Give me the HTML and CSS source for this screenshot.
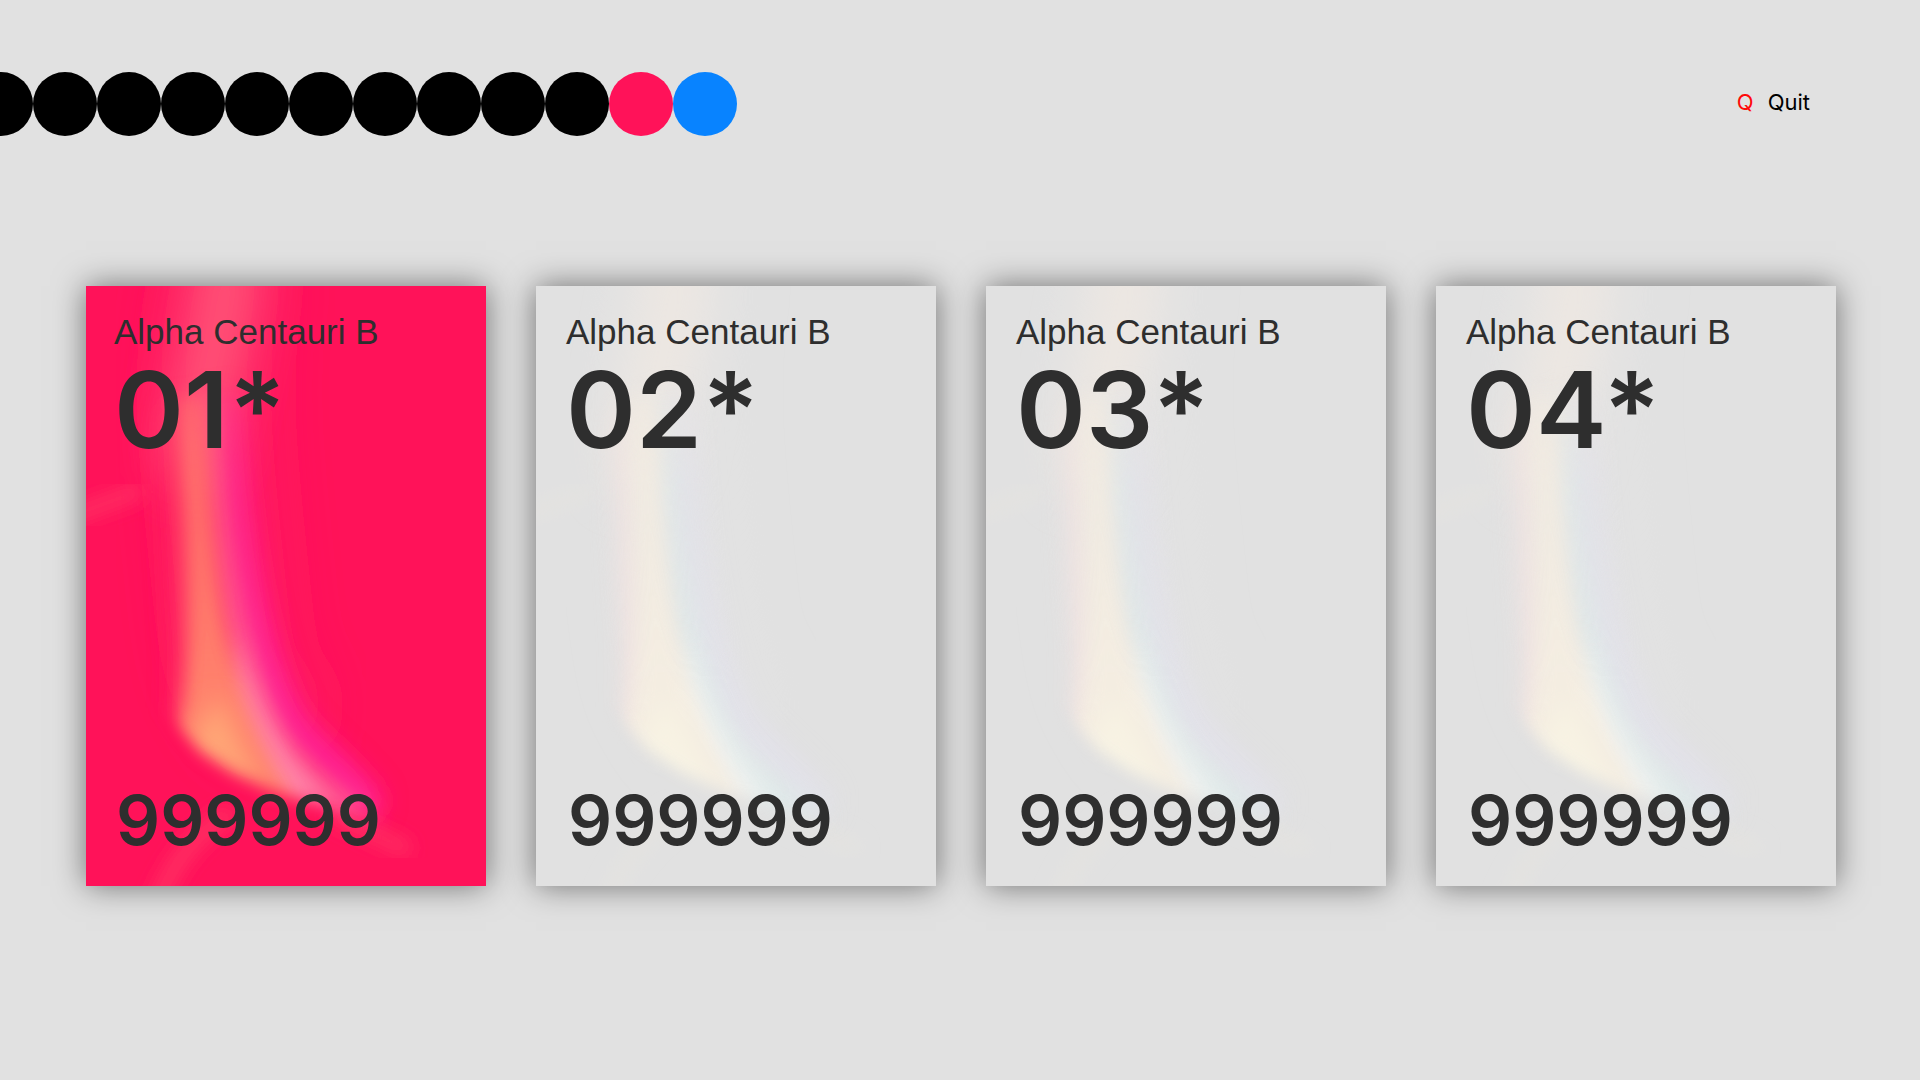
FILE: index.html
```html
<!DOCTYPE html>
<html lang="en">
<head>
  <meta charset="utf-8">
  <meta name="viewport" content="width=device-width, initial-scale=1">
  <title>Alpha Centauri B</title>
  <link rel="stylesheet" href="styles.css">
</head>
<body>
  <svg class="defs" aria-hidden="true">
    <defs>
      <filter id="blur-s" x="-100%" y="-30%" width="300%" height="160%"><feGaussianBlur stdDeviation="9"/></filter>
      <filter id="blur-m" x="-200%" y="-50%" width="500%" height="200%"><feGaussianBlur stdDeviation="12"/></filter>
      <filter id="blur-l" x="-200%" y="-50%" width="500%" height="200%"><feGaussianBlur stdDeviation="26"/></filter>
      <filter id="blur-edge" x="-10%" y="-10%" width="120%" height="120%"><feGaussianBlur stdDeviation="8"/></filter>
      <linearGradient id="rise" gradientUnits="userSpaceOnUse" x1="0" y1="60" x2="0" y2="400">
        <stop offset="0" stop-color="#333"/>
        <stop offset="0.4" stop-color="#bbb"/>
        <stop offset="1" stop-color="#fff"/>
      </linearGradient>
      <mask id="above-floor" maskUnits="userSpaceOnUse" x="0" y="0" width="400" height="600">
        <path filter="url(#blur-edge)" fill="url(#rise)" d="M-40-40H440V600L334 566L274 540L227 519L187 505L147 487L114 466L80 430L-40 380Z"/>
      </mask>
    </defs>
    <symbol id="flare" viewBox="0 0 400 600">
      <g fill="none" stroke-linecap="round">
        <path class="flare-haze" filter="url(#blur-l)" stroke-width="110" d="M140 0C120 90 135 200 145 300S160 380 180 420"/>
        <path class="flare-top" filter="url(#blur-l)" stroke-width="56" d="M142-30C140 30 120 90 106 170"/>
        <path class="flare-ray" filter="url(#blur-s)" stroke-width="14" d="M-20 232L50 206"/>
        <path class="flare-ray" filter="url(#blur-s)" stroke-width="16" d="M70 620Q92 560 140 530"/>
        <path class="flare-ray" filter="url(#blur-s)" stroke-width="14" d="M250 530L318 562"/>
        <g mask="url(#above-floor)">
          <path class="flare-outer" filter="url(#blur-m)" stroke-width="32" d="M142 120C148 230 158 310 182 385S225 450 280 515"/>
          <path class="flare-left" filter="url(#blur-m)" stroke-width="26" d="M92 130C94 220 98 300 102 360S92 440 115 470"/>
          <path class="flare-right" filter="url(#blur-m)" d="M112 110H132C140 240 150 320 176 400S225 475 290 535L200 520C160 470 128 330 112 110Z"/>
          <path class="flare-glow" filter="url(#blur-m)" d="M145 350C168 420 190 460 235 515L160 530L130 440Z"/>
          <path class="flare-mid" filter="url(#blur-s)" d="M90 110H118C126 210 130 290 142 350S165 440 215 530L130 510L88 448C108 400 100 300 90 110Z"/>
          <path class="flare-core" filter="url(#blur-m)" d="M132 410C148 440 164 480 190 530L130 510L98 465Z"/>
        </g>
      </g>
    </symbol>
  </svg>

  <header class="topbar">
    <div class="dots" role="img" aria-label="Progress">
      <span class="dot"></span><span class="dot"></span><span class="dot"></span><span class="dot"></span>
      <span class="dot"></span><span class="dot"></span><span class="dot"></span><span class="dot"></span>
      <span class="dot"></span><span class="dot"></span><span class="dot dot-pink"></span><span class="dot dot-blue"></span>
    </div>
    <button class="quit" type="button"><kbd class="quit-key">Q</kbd><span>Quit</span></button>
  </header>

  <main>
    <ul class="cards">
      <li class="card card-active">
        <svg class="flare" aria-hidden="true"><use href="#flare"/></svg>
        <h2 class="card-name">Alpha Centauri B</h2>
        <p class="card-number">01*</p>
        <p class="card-score">999999</p>
      </li>
      <li class="card">
        <svg class="flare" aria-hidden="true"><use href="#flare"/></svg>
        <h2 class="card-name">Alpha Centauri B</h2>
        <p class="card-number">02*</p>
        <p class="card-score">999999</p>
      </li>
      <li class="card">
        <svg class="flare" aria-hidden="true"><use href="#flare"/></svg>
        <h2 class="card-name">Alpha Centauri B</h2>
        <p class="card-number">03*</p>
        <p class="card-score">999999</p>
      </li>
      <li class="card">
        <svg class="flare" aria-hidden="true"><use href="#flare"/></svg>
        <h2 class="card-name">Alpha Centauri B</h2>
        <p class="card-number">04*</p>
        <p class="card-score">999999</p>
      </li>
    </ul>
  </main>
</body>
</html>
```
FILE: styles.css
```css
* {
  box-sizing: border-box;
}

body {
  margin: 0;
  min-height: 100vh;
  background: #e1e1e1;
  color: #2e2e2e;
  font-family: Inter, "Liberation Sans", sans-serif;
  overflow-x: hidden;
}

.defs {
  position: absolute;
  width: 0;
  height: 0;
}

.topbar {
  display: flex;
  align-items: center;
  justify-content: space-between;
  padding: 72px 110px 0 0;
}

/* The row of dots runs in from beyond the left edge */
.dots {
  display: flex;
  margin-left: -31px;
}

.dot {
  width: 64px;
  height: 64px;
  border-radius: 50%;
  background: #000;
}

.dot-pink {
  background: #ff1259;
}

.dot-blue {
  background: #0883ff;
}

.quit {
  display: flex;
  gap: 14px;
  padding: 0 0 4px;
  border: 0;
  background: none;
  color: #000;
  font: 400 22px/28px Inter, "Liberation Sans", sans-serif;
  cursor: pointer;
}

.quit-key {
  color: #ff0a0a;
  font: inherit;
}

.cards {
  display: grid;
  grid-template-columns: repeat(4, minmax(0, 1fr));
  gap: 50px;
  margin: 0;
  padding: 150px 84px 80px 86px;
  list-style: none;
}

.card {
  --haze: #e3e3e3;
  --top: #efe8e2;
  --ray: #e4e3e0;
  --left: #f4e3e1;
  --mid: #f4ede1;
  --right: #deeaea;
  --outer: #e2e1e9;
  --core: #f8f3e3;
  --glow: #eff1ef;

  position: relative;
  display: flex;
  flex-direction: column;
  aspect-ratio: 2 / 3;
  padding: 24px 30px 30px;
  background: #e1e1e1;
  box-shadow: 0 0 30px rgba(0, 0, 0, 0.5);
}

.card-active {
  --haze: #ff1c62;
  --top: #ff5c7a;
  --ray: #ff3064;
  --left: #ff2c62;
  --mid: #ff826c;
  --right: #ff6a9c;
  --outer: #ff2094;
  --core: #ffa676;
  --glow: #ff88aa;

  padding-left: 28px;
  background: #ff1259;
}

.flare {
  position: absolute;
  inset: 0;
  width: 100%;
  height: 100%;
}

.flare-haze { stroke: var(--haze); }
.flare-top { stroke: var(--top); }
.flare-ray { stroke: var(--ray); }
.flare-left { stroke: var(--left); }
.flare-outer { stroke: var(--outer); }
.flare-right { fill: var(--right); }
.flare-mid { fill: var(--mid); }
.flare-core { fill: var(--core); }
.flare-glow { fill: var(--glow); }

.card-name,
.card-number,
.card-score {
  position: relative;
  margin: 0;
  white-space: nowrap;
}

.card-name {
  font-family: "Liberation Sans", Arial, sans-serif;
  font-size: 35px;
  font-weight: 400;
  line-height: 44px;
}

.card-number {
  font-size: 106px;
  font-weight: 600;
  line-height: 112px;
}

.card-score {
  margin-top: auto;
  padding-left: 2px;
  font-size: 69px;
  font-weight: 600;
  line-height: 72px;
}
```
